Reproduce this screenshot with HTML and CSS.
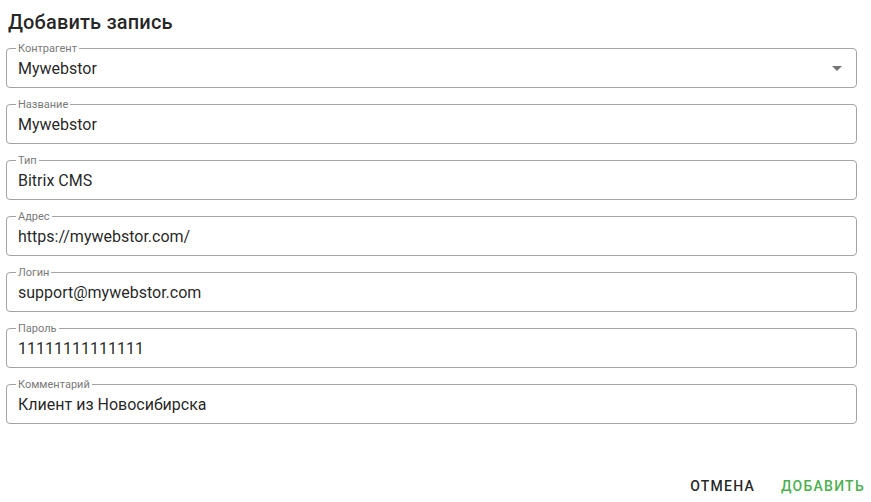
FILE: index.html
```html
<!DOCTYPE html>
<html lang="ru">
<head>
<meta charset="utf-8">
<title>Добавить запись</title>
<link rel="stylesheet" href="styles.css">
</head>
<body>
<div class="dialog">
  <h2 class="title">Добавить запись</h2>
  <div class="form">
    <div class="field select">
      <span class="label">Контрагент</span>
      <span class="value">Mywebstor</span>
      <svg class="arrow" width="24" height="24" viewBox="0 0 24 24"><path d="M7 10l5 5 5-5z"/></svg>
    </div>
    <div class="field"><span class="label">Название</span><span class="value">Mywebstor</span></div>
    <div class="field"><span class="label">Тип</span><span class="value">Bitrix CMS</span></div>
    <div class="field"><span class="label">Адрес</span><span class="value">https://mywebstor.com/</span></div>
    <div class="field"><span class="label">Логин</span><span class="value">support@mywebstor.com</span></div>
    <div class="field"><span class="label">Пароль</span><span class="value">11111111111111</span></div>
    <div class="field"><span class="label">Комментарий</span><span class="value">Клиент из Новосибирска</span></div>
  </div>
  <div class="actions">
    <button class="btn cancel">Отмена</button>
    <button class="btn primary">Добавить</button>
  </div>
</div>
</body>
</html>
```
FILE: styles.css
```css
* { box-sizing: border-box; }
html, body {
  margin: 0;
  padding: 0;
  background: #fff;
}
body {
  font-family: Roboto, "Noto Sans", sans-serif;
  color: rgba(0, 0, 0, 0.87);
  width: 871px;
  height: 502px;
  overflow: hidden;
}
.dialog {
  display: flex;
  flex-direction: column;
}
.title {
  margin: 6px 0 0 8px;
  font-size: 20px;
  font-weight: 500;
  line-height: 32px;
  letter-spacing: 0.15px;
  color: rgba(0, 0, 0, 0.87);
}
.form {
  margin-top: 10px;
  display: flex;
  flex-direction: column;
  gap: 16px;
}
.field {
  position: relative;
  height: 40px;
  margin: 0 14px 0 6px;
  border: 1px solid #a3a3a3;
  border-radius: 4px;
  display: flex;
  align-items: center;
  padding: 0 11px;
}
.label {
  position: absolute;
  top: -7px;
  left: 9px;
  padding: 0 2px;
  background: #fff;
  font-size: 11px;
  line-height: 13px;
  color: #7a7a7a;
}
.value {
  font-size: 16px;
  line-height: 19px;
  flex: 1;
}
.arrow {
  fill: #757575;
  margin-right: -4px;
}
.actions {
  margin-top: 50px;
  display: flex;
  justify-content: flex-end;
  gap: 26px;
  padding-right: 6px;
}
.btn {
  background: none;
  border: 0;
  padding: 0;
  font-family: Roboto, "Noto Sans", sans-serif;
  font-size: 14px;
  font-weight: 500;
  line-height: 24px;
  letter-spacing: 1.25px;
  text-transform: uppercase;
  cursor: pointer;
}
.cancel { color: rgba(0, 0, 0, 0.87); }
.primary { color: #4caf50; }
```
